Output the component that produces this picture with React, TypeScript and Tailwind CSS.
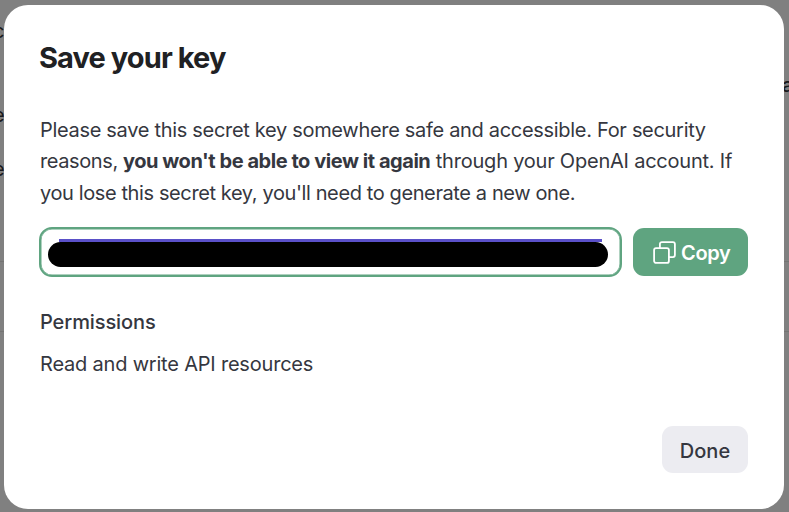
const CopyIcon = () => (
  <svg className="h-[23px] w-[23px] shrink-0" viewBox="0 0 23 23" fill="none" stroke="currentColor" strokeWidth="1.8">
    <rect x="1.1" y="7.1" width="14.8" height="14.8" rx="2" />
    <path d="M6.9 7.1V3.1a2 2 0 0 1 2-2h11a2 2 0 0 1 2 2v11a2 2 0 0 1-2 2h-4" />
  </svg>
);

const Backdrop = () => (
  <div className="absolute inset-0 overflow-hidden text-[20px] leading-6 text-[#19191c]" aria-hidden="true">
    <span className="absolute top-[19px] left-[-7px]">c</span>
    <span className="absolute top-[103px] left-[-7px]">e</span>
    <span className="absolute top-[157px] left-[-7px]">e</span>
    <span className="absolute top-[73px] left-[782px] font-medium">a</span>
    <div className="absolute top-[261px] h-px w-full bg-[#747473]" />
    <div className="absolute top-[331px] h-px w-full bg-[#747473]" />
  </div>
);

const SecretKeyField = () => (
  <div className="h-[50px] w-[583px] rounded-[13px] border-2 border-[#5fa480] pt-[10px] pl-[7px] shadow-[inset_0_0_0_0.5px_#5fa480]">
    <div className="ml-[11px] h-[3px] w-[543px] bg-[#5a50c8]" />
    <div className="h-[25px] w-[560px] rounded-full bg-black" />
  </div>
);

const App = () => {
  return (
    <div className="relative h-[512px] w-[789px] overflow-hidden bg-[#808080] pt-[5px] pl-1 font-['Inter',sans-serif]">
      <Backdrop />
      <div
        role="dialog"
        className="relative flex h-[504px] w-[780px] flex-col rounded-[24px] bg-white pr-9 pl-9 text-[20px] text-[#353740]"
      >
        <h2 className="mt-[34px] -ml-px text-[29px] leading-[38px] font-bold tracking-[-0.9px] text-[#202123]">
          Save your key
        </h2>

        <p className="mt-[38px] h-[95px] leading-[31.4px] whitespace-nowrap">
          <span className="block tracking-[-0.31px]">
            Please save this secret key somewhere safe and accessible. For security
          </span>
          <span className="block tracking-[-0.22px]">
            <span className="tracking-[-0.4px]">reasons, </span>
            <b className="font-bold tracking-[-0.45px]">you won't be able to view it again</b> through your OpenAI
            account. If
          </span>
          <span className="block tracking-[-0.39px]">you lose this secret key, you'll need to generate a new one.</span>
        </p>

        <div className="mt-[17px] -ml-px flex items-center justify-between">
          <SecretKeyField />
          <button className="flex h-12 w-[115px] items-center rounded-[11px] bg-[#5fa480] pl-5 font-semibold text-white">
            <CopyIcon />
            <span className="ml-[5px] pt-px tracking-[-0.3px]">Copy</span>
          </button>
        </div>

        <h3 className="mt-[31px] leading-[28px] font-medium tracking-[-0.1px]">Permissions</h3>
        <p className="mt-[14px] leading-[28px] tracking-[-0.2px]">Read and write API resources</p>

        <button className="mt-[48px] h-[47px] w-[86px] self-end rounded-[11px] bg-[#ececf1] pt-[3px] font-medium">
          Done
        </button>
      </div>
    </div>
  );
};

export default App;
